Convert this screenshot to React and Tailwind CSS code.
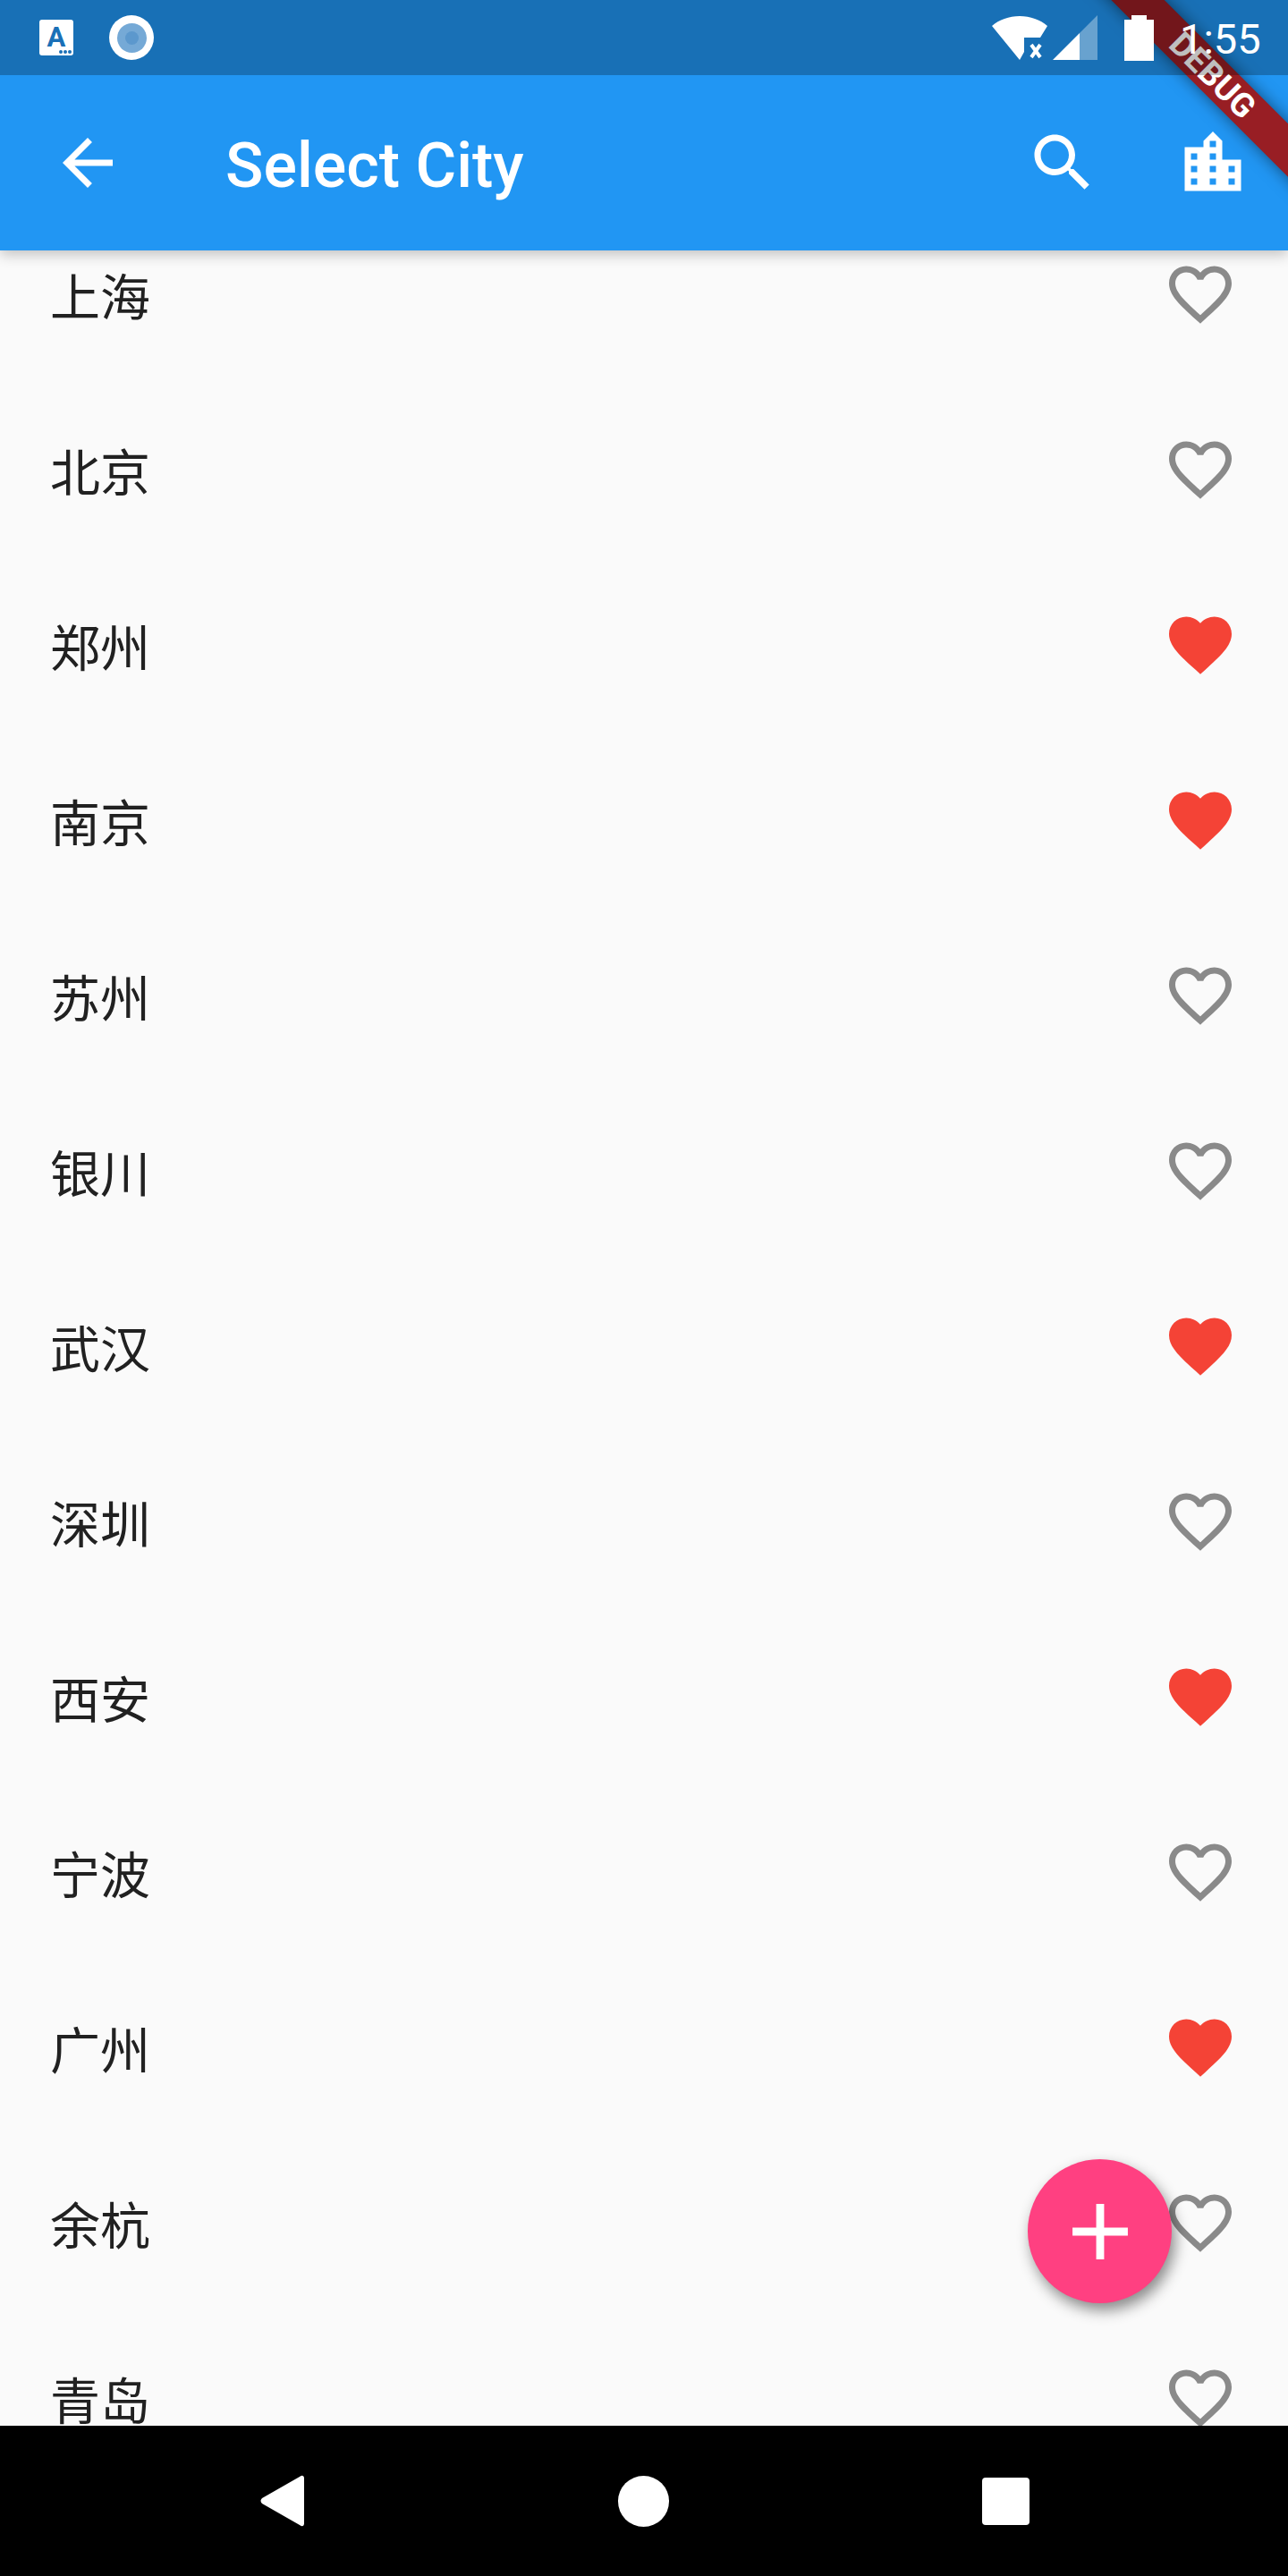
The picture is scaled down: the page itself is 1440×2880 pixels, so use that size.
const CITIES = [
  { name: "上海", liked: false },
  { name: "北京", liked: false },
  { name: "郑州", liked: true },
  { name: "南京", liked: true },
  { name: "苏州", liked: false },
  { name: "银川", liked: false },
  { name: "武汉", liked: true },
  { name: "深圳", liked: false },
  { name: "西安", liked: true },
  { name: "宁波", liked: false },
  { name: "广州", liked: true },
  { name: "余杭", liked: false },
  { name: "青岛", liked: false },
];

const HEART =
  "M12 21.35l-1.45-1.32C5.4 15.36 2 12.28 2 8.5 2 5.42 4.42 3 7.5 3c1.74 0 3.41.81 4.5 2.09C13.09 3.81 14.76 3 16.5 3 19.58 3 22 5.42 22 8.5c0 3.78-3.4 6.86-8.55 11.54L12 21.35z";
const HEART_BORDER =
  "M16.5 3c-1.74 0-3.41.81-4.5 2.09C10.91 3.81 9.24 3 7.5 3 4.42 3 2 5.42 2 8.5c0 3.78 3.4 6.86 8.55 11.54L12 21.35l1.45-1.32C18.6 15.36 22 12.28 22 8.5 22 5.42 19.58 3 16.5 3zm-4.4 15.55l-.1.1-.1-.1C7.14 14.24 4 11.39 4 8.5 4 6.5 5.5 5 7.5 5c1.54 0 3.04.99 3.57 2.36h1.87C13.46 5.99 14.96 5 16.5 5c2 0 3.5 1.5 3.5 3.5 0 2.89-3.14 5.74-7.9 10.05z";

function Icon({ d, className }) {
  return (
    <svg viewBox="0 0 24 24" className={className} fill="currentColor">
      <path d={d} />
    </svg>
  );
}

// translucent system bar, it darkens whatever is below it (app bar, debug banner)
function StatusBar() {
  return (
    <div className="absolute z-40 left-0 top-0 w-full h-[84px] bg-black/25 flex items-center pl-[44px] text-white">
      <div className="relative w-[38px] h-[40px] bg-white rounded-[3px] text-[#1a70b7]">
        <span className="absolute left-0 right-0 top-[3px] text-center font-['Roboto',sans-serif] font-bold text-[31px] leading-[34px]">A</span>
        <div className="absolute right-[2px] bottom-[2px] flex gap-[1px]">
          <span className="w-[4px] h-[4px] rounded-full bg-[#1a70b7]" />
          <span className="w-[4px] h-[4px] rounded-full bg-[#1a70b7]" />
          <span className="w-[4px] h-[4px] rounded-full bg-[#1a70b7]" />
        </div>
      </div>
      <div className="ml-[40px] w-[50px] h-[50px] rounded-full bg-white flex items-center justify-center">
        <div className="w-[33px] h-[33px] rounded-full bg-[#75a9d6] flex items-center justify-center">
          <div className="w-[15px] h-[15px] rounded-full bg-[#5c98cd]" />
        </div>
      </div>
      <svg viewBox="0 0 64 50" className="ml-[936px] w-[64px] h-[50px]" fill="currentColor">
        <path d="M1 12 C9 5 20 1 32 1 C44 1 55 5 63 12 L55 25 H37 V41 L32 50 Z" />
        <path d="M45 33 L55 47 M55 33 L45 47" stroke="currentColor" strokeWidth="4" fill="none" />
      </svg>
      <svg viewBox="0 0 50 50" className="ml-[5px] w-[50px] h-[50px]" fill="currentColor">
        <path d="M0 50 L30 20 V50 Z" />
        <path d="M30 20 L50 0 V50 H30 Z" opacity="0.35" />
      </svg>
      <svg viewBox="0 0 33 51" className="ml-[30px] w-[33px] h-[51px]" fill="currentColor">
        <path d="M8 0 H25 V5 H33 V51 H0 V5 H8 Z" />
      </svg>
      <span className="ml-[29px] pt-[3px] font-['Roboto',sans-serif] text-[47px] leading-none">1:55</span>
    </div>
  );
}

function AppBar() {
  return (
    <div className="relative z-10 h-[280px] pt-[84px] shrink-0 bg-[#2196f3] flex items-center text-white shadow-[0_5px_14px_rgba(0,0,0,0.22)]">
      <div className="w-[196px] pl-[56px]">
        <Icon d="M20 11H7.83l5.59-5.59L12 4l-8 8 8 8 1.41-1.41L7.83 13H20v-2z" className="w-[84px] h-[84px]" />
      </div>
      <h1 className="ml-[56px] flex-1 pt-[6px] font-['Roboto',sans-serif] font-medium text-[70px] leading-none">Select City</h1>
      <div className="w-[168px] flex justify-center">
        <Icon
          d="M15.5 14h-.79l-.28-.27C15.41 12.59 16 11.11 16 9.5 16 5.91 13.09 3 9.5 3S3 5.91 3 9.5 5.91 16 9.5 16c1.61 0 3.09-.59 4.23-1.57l.27.28v.79l5 4.99L20.49 19l-4.99-5zm-6 0C7.01 14 5 11.99 5 9.5S7.01 5 9.5 5 14 7.01 14 9.5 11.99 14 9.5 14z"
          className="w-[84px] h-[84px]"
        />
      </div>
      <div className="w-[168px] flex justify-center">
        <Icon
          d="M15 11V5l-3-3-3 3v2H3v14h18V11h-6zm-8 8H5v-2h2v2zm0-4H5v-2h2v2zm0-4H5V9h2v2zm6 8h-2v-2h2v2zm0-4h-2v-2h2v2zm0-4h-2V9h2v2zm0-4h-2V5h2v2zm6 12h-2v-2h2v2zm0-4h-2v-2h2v2z"
          className="w-[84px] h-[84px]"
        />
      </div>
    </div>
  );
}

function CityRow({ city }) {
  return (
    <div className="h-[196px] flex items-center justify-between px-[56px]">
      <span className="pt-[8px] font-['Roboto','Noto_Sans_CJK_SC',sans-serif] text-[56px] leading-none text-[#212121]">{city.name}</span>
      {city.liked ? (
        <Icon d={HEART} className="w-[84px] h-[84px] -mt-[2px] text-[#f44336]" />
      ) : (
        <Icon d={HEART_BORDER} className="w-[84px] h-[84px] -mt-[2px] text-[#8a8a8a]" />
      )}
    </div>
  );
}

function NavBar() {
  return (
    <div className="relative z-10 h-[168px] shrink-0 bg-black flex items-center justify-center gap-[350px] pl-[2px]">
      <svg viewBox="0 0 50 58" className="w-[50px] h-[58px]" fill="white">
        <path d="M49 3 V55 Q48 59 44 56 L2 32 Q-1 29 2 26 L44 2 Q48 -1 49 3 Z" />
      </svg>
      <div className="w-[57px] h-[57px] rounded-full bg-white" />
      <div className="w-[53px] h-[53px] rounded-[4px] bg-white" />
    </div>
  );
}

export default function App() {
  return (
    <div className="relative w-[1440px] h-[2880px] overflow-hidden flex flex-col bg-[#fafafa]">
      <StatusBar />
      <AppBar />
      <div className="flex-1 overflow-hidden">
        <div className="-mt-[48px]">
          {CITIES.map((city) => (
            <CityRow key={city.name} city={city} />
          ))}
        </div>
      </div>
      <NavBar />

      <button className="absolute z-20 left-[1149px] top-[2414px] w-[161px] h-[161px] rounded-full bg-[#ff4081] text-white flex items-center justify-center shadow-[4px_8px_16px_rgba(0,0,0,0.45)]">
        <Icon d="M19 13h-6v6h-2v-6H5v-2h6V5h2v6h6v2z" className="w-[106px] h-[106px]" />
      </button>

      <div className="absolute z-30 left-[1106px] top-[63px] w-[500px] h-[42px] rotate-45 bg-[#981e24] shadow-[0_0_18px_rgba(0,0,0,0.5)] flex items-center justify-center">
        <span className="font-['Roboto',sans-serif] font-bold text-[37px] leading-none text-white">DEBUG</span>
      </div>
    </div>
  );
}
